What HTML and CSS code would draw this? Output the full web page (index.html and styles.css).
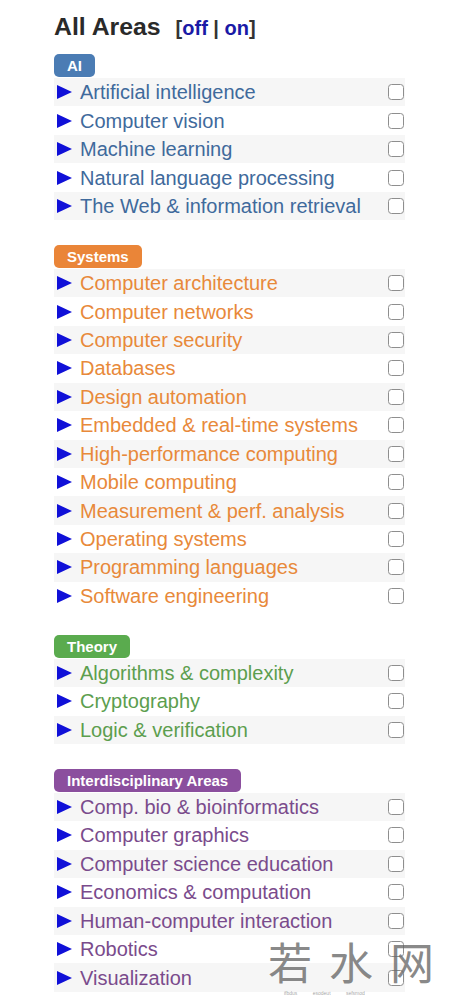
FILE: index.html
```html
<!DOCTYPE html>
<html lang="en">
<head>
<meta charset="utf-8">
<title>All Areas</title>
<link rel="stylesheet" href="styles.css">
</head>
<body>
<div class="panel">
  <div class="title"><span class="title-main">All Areas</span><span class="toggle">[<a class="tlink">off</a> | <a class="tlink">on</a>]</span></div>

  <section class="group ai">
    <div class="badge">AI</div>
    <ul class="rows">
      <li class="row"><svg class="tri" viewBox="0 0 15 14"><polygon points="0,0 15,7 0,14"/></svg><span class="label">Artificial intelligence</span><input type="checkbox" class="cb"></li>
      <li class="row"><svg class="tri" viewBox="0 0 15 14"><polygon points="0,0 15,7 0,14"/></svg><span class="label">Computer vision</span><input type="checkbox" class="cb"></li>
      <li class="row"><svg class="tri" viewBox="0 0 15 14"><polygon points="0,0 15,7 0,14"/></svg><span class="label">Machine learning</span><input type="checkbox" class="cb"></li>
      <li class="row"><svg class="tri" viewBox="0 0 15 14"><polygon points="0,0 15,7 0,14"/></svg><span class="label">Natural language processing</span><input type="checkbox" class="cb"></li>
      <li class="row"><svg class="tri" viewBox="0 0 15 14"><polygon points="0,0 15,7 0,14"/></svg><span class="label">The Web &amp; information retrieval</span><input type="checkbox" class="cb"></li>
    </ul>
  </section>

  <section class="group systems">
    <div class="badge">Systems</div>
    <ul class="rows">
      <li class="row"><svg class="tri" viewBox="0 0 15 14"><polygon points="0,0 15,7 0,14"/></svg><span class="label">Computer architecture</span><input type="checkbox" class="cb"></li>
      <li class="row"><svg class="tri" viewBox="0 0 15 14"><polygon points="0,0 15,7 0,14"/></svg><span class="label">Computer networks</span><input type="checkbox" class="cb"></li>
      <li class="row"><svg class="tri" viewBox="0 0 15 14"><polygon points="0,0 15,7 0,14"/></svg><span class="label">Computer security</span><input type="checkbox" class="cb"></li>
      <li class="row"><svg class="tri" viewBox="0 0 15 14"><polygon points="0,0 15,7 0,14"/></svg><span class="label">Databases</span><input type="checkbox" class="cb"></li>
      <li class="row"><svg class="tri" viewBox="0 0 15 14"><polygon points="0,0 15,7 0,14"/></svg><span class="label">Design automation</span><input type="checkbox" class="cb"></li>
      <li class="row"><svg class="tri" viewBox="0 0 15 14"><polygon points="0,0 15,7 0,14"/></svg><span class="label">Embedded &amp; real-time systems</span><input type="checkbox" class="cb"></li>
      <li class="row"><svg class="tri" viewBox="0 0 15 14"><polygon points="0,0 15,7 0,14"/></svg><span class="label">High-performance computing</span><input type="checkbox" class="cb"></li>
      <li class="row"><svg class="tri" viewBox="0 0 15 14"><polygon points="0,0 15,7 0,14"/></svg><span class="label">Mobile computing</span><input type="checkbox" class="cb"></li>
      <li class="row"><svg class="tri" viewBox="0 0 15 14"><polygon points="0,0 15,7 0,14"/></svg><span class="label">Measurement &amp; perf. analysis</span><input type="checkbox" class="cb"></li>
      <li class="row"><svg class="tri" viewBox="0 0 15 14"><polygon points="0,0 15,7 0,14"/></svg><span class="label">Operating systems</span><input type="checkbox" class="cb"></li>
      <li class="row"><svg class="tri" viewBox="0 0 15 14"><polygon points="0,0 15,7 0,14"/></svg><span class="label">Programming languages</span><input type="checkbox" class="cb"></li>
      <li class="row"><svg class="tri" viewBox="0 0 15 14"><polygon points="0,0 15,7 0,14"/></svg><span class="label">Software engineering</span><input type="checkbox" class="cb"></li>
    </ul>
  </section>

  <section class="group theory">
    <div class="badge">Theory</div>
    <ul class="rows">
      <li class="row"><svg class="tri" viewBox="0 0 15 14"><polygon points="0,0 15,7 0,14"/></svg><span class="label">Algorithms &amp; complexity</span><input type="checkbox" class="cb"></li>
      <li class="row"><svg class="tri" viewBox="0 0 15 14"><polygon points="0,0 15,7 0,14"/></svg><span class="label">Cryptography</span><input type="checkbox" class="cb"></li>
      <li class="row"><svg class="tri" viewBox="0 0 15 14"><polygon points="0,0 15,7 0,14"/></svg><span class="label">Logic &amp; verification</span><input type="checkbox" class="cb"></li>
    </ul>
  </section>

  <section class="group inter">
    <div class="badge">Interdisciplinary Areas</div>
    <ul class="rows">
      <li class="row"><svg class="tri" viewBox="0 0 15 14"><polygon points="0,0 15,7 0,14"/></svg><span class="label">Comp. bio &amp; bioinformatics</span><input type="checkbox" class="cb"></li>
      <li class="row"><svg class="tri" viewBox="0 0 15 14"><polygon points="0,0 15,7 0,14"/></svg><span class="label">Computer graphics</span><input type="checkbox" class="cb"></li>
      <li class="row"><svg class="tri" viewBox="0 0 15 14"><polygon points="0,0 15,7 0,14"/></svg><span class="label">Computer science education</span><input type="checkbox" class="cb"></li>
      <li class="row"><svg class="tri" viewBox="0 0 15 14"><polygon points="0,0 15,7 0,14"/></svg><span class="label">Economics &amp; computation</span><input type="checkbox" class="cb"></li>
      <li class="row"><svg class="tri" viewBox="0 0 15 14"><polygon points="0,0 15,7 0,14"/></svg><span class="label">Human-computer interaction</span><input type="checkbox" class="cb"></li>
      <li class="row"><svg class="tri" viewBox="0 0 15 14"><polygon points="0,0 15,7 0,14"/></svg><span class="label">Robotics</span><input type="checkbox" class="cb"></li>
      <li class="row"><svg class="tri" viewBox="0 0 15 14"><polygon points="0,0 15,7 0,14"/></svg><span class="label">Visualization</span><input type="checkbox" class="cb"></li>
    </ul>
  </section>
</div>
<div class="watermark"><div class="wm-big">若水网</div><div class="wm-small">ifbdus esodeut sefsmod</div></div>
</body>
</html>
```

FILE: styles.css
```css
html, body {
  margin: 0;
  padding: 0;
  background: #ffffff;
}
body {
  font-family: "Liberation Sans", Arial, Helvetica, sans-serif;
  width: 450px;
  height: 998px;
  overflow: hidden;
  position: relative;
}
.panel {
  padding: 13px 0 0 54px;
  width: 351px;
}
.title {
  height: 28px;
  line-height: 28px;
  white-space: nowrap;
}
.title-main {
  font-size: 24.8px;
  font-weight: bold;
  color: #2a2a2a;
}
.toggle {
  font-size: 20px;
  font-weight: bold;
  color: #333333;
  margin-left: 15px;
}
.tlink {
  color: #1a1aa6;
}
.group {
  margin-top: 24.7px;
}
.group.ai {
  margin-top: 13px;
}
.badge {
  display: inline-block;
  height: 23px;
  line-height: 23px;
  padding: 0 13px;
  border-radius: 5px;
  font-size: 15px;
  font-weight: bold;
  color: #ffffff;
  margin-bottom: 1px;
  vertical-align: top;
}
.rows {
  list-style: none;
  margin: 0;
  padding: 0;
}
.row {
  display: flex;
  align-items: center;
  height: 28.45px;
  padding-left: 3px;
  padding-right: 1px;
}
.row:nth-child(odd) {
  background: #f6f6f6;
}
.tri {
  width: 15px;
  height: 14px;
  flex: none;
  fill: #1010d8;
}
.label {
  flex: 1;
  margin-left: 8px;
  font-size: 20px;
  line-height: 28px;
  white-space: nowrap;
}
.cb {
  appearance: none;
  -webkit-appearance: none;
  flex: none;
  width: 16px;
  height: 16px;
  margin: 0;
  border: 1.5px solid #8e8e8e;
  border-radius: 3.5px;
  background: #ffffff;
  box-sizing: border-box;
}

.ai .badge { background: #4b7cb4; }
.ai .label { color: #3f6a9c; }
.systems .badge { background: #ea8538; }
.systems .label { color: #e8893a; }
.theory .badge { background: #5aab4e; }
.theory .label { color: #5c9e4e; }
.inter .badge { background: #8b4f9e; }
.inter .label { color: #7a4b8c; }

.watermark {
  position: absolute;
  left: 268px;
  top: 936px;
  width: 180px;
  pointer-events: none;
}
.wm-big {
  font-family: "Noto Sans CJK SC", sans-serif;
  font-size: 44px;
  font-weight: 400;
  line-height: 50px;
  letter-spacing: 17px;
  color: rgba(105, 105, 105, 0.8);
  white-space: nowrap;
}
.wm-small {
  font-family: "Liberation Sans", sans-serif;
  font-size: 5px;
  line-height: 6px;
  color: rgba(120, 120, 120, 0.7);
  word-spacing: 14px;
  padding-left: 16px;
  margin-top: 4px;
  white-space: nowrap;
}
```
